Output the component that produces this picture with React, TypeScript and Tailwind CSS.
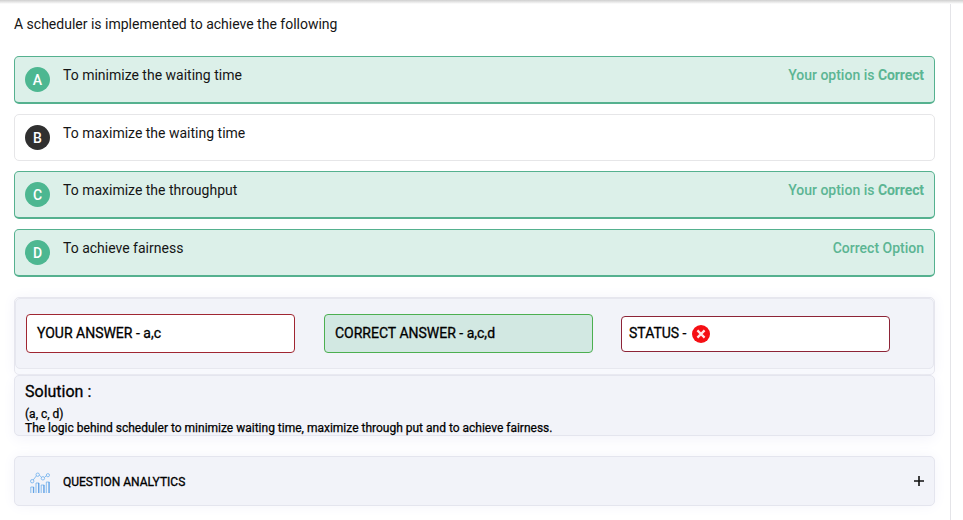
import React from "react";

type Option = {
  letter: string;
  text: string;
  correct: boolean;
  note?: React.ReactNode;
  box: string;
};

const chosen = (
  <>
    Your option is <b className="font-bold tracking-[-0.1px]">Correct</b>
  </>
);

const options: Option[] = [
  { letter: "A", text: "To minimize the waiting time", correct: true, note: chosen, box: "h-12 mb-2.5" },
  { letter: "B", text: "To maximize the waiting time", correct: false, box: "h-[47px] mb-2.5" },
  { letter: "C", text: "To maximize the throughput", correct: true, note: chosen, box: "h-12 mb-2.5" },
  { letter: "D", text: "To achieve fairness", correct: true, note: "Correct Option", box: "h-12" },
];

function OptionRow({ letter, text, correct, note, box }: Option) {
  return (
    <div
      className={`${box} flex items-start rounded-[5px] border pl-2.5 pr-2.5 ${
        correct ? "border-[#55b18f] border-b-2 bg-[#dcf0e9]" : "border-[#e6e6e8] bg-white"
      }`}
    >
      <span
        className={`mt-2.5 flex size-[25px] items-center justify-center rounded-full text-[14px] font-medium leading-none text-white ${
          correct ? "bg-[#4db791]" : "bg-[#303030]"
        }`}
      >
        {letter}
      </span>
      <span className="ml-[13px] mt-2 text-[14px] leading-5">{text}</span>
      {note && (
        <span className="ml-auto mt-2 text-[14px] font-medium leading-5 text-[#5bb593]">{note}</span>
      )}
    </div>
  );
}

function ErrorIcon() {
  return (
    <svg className="ml-1.5 size-[18px]" viewBox="0 0 18 18">
      <circle cx="9" cy="9" r="9" fill="#f50f14" />
      <path d="M5.4 5.4l7.2 7.2M12.6 5.4l-7.2 7.2" stroke="#ffe9e9" strokeWidth="2.2" />
    </svg>
  );
}

function AnalyticsIcon() {
  return (
    <svg className="h-[22px] w-5" viewBox="0 0 20 22" fill="none" stroke="#6fb0ee" strokeWidth="0.8">
      <path d="M3.2 8L6.5 3.7M9.3 3.2l2.3 2.1M14.5 5.4l2.1-1.9" />
      <circle cx="2.2" cy="9.2" r="1.7" />
      <circle cx="7.7" cy="2.7" r="1.7" />
      <circle cx="12.9" cy="6.3" r="1.7" />
      <circle cx="17.9" cy="3.2" r="1.6" />
      <path d="M.8 21v-6h3v6M6 21V11h3v10M11.2 21v-8h3v8M16.3 21V10h3v11" />
      <path d="M3.4 15v6M8.6 11v10M13.8 13v8M18.9 10v11" stroke="#4a90e0" />
    </svg>
  );
}

export default function App() {
  return (
    <div className="h-[520px] w-[963px] overflow-hidden bg-white font-[Roboto,sans-serif] text-[#151515]">
      <div className="h-1 bg-linear-to-b from-[#cfcfcf] to-white" />
      <main className="h-[516px] w-[951px] border-r border-[#e4e4e8] pl-3.5 pr-[15px] pt-2.5">
        <p className="mb-[22px] h-5 text-[14px] leading-5">A scheduler is implemented to achieve the following</p>
        <div>
          {options.map((o) => (
            <OptionRow key={o.letter} {...o} />
          ))}
        </div>
        <section className="mt-5 h-[78px] rounded-[5px] border border-[#e6e6ee] bg-[#f8f9fd] shadow-[0_0_14px_#f4f4fb]">
          <div className="flex h-[71px] items-center rounded-[5px] border border-[#e6e7ef] bg-[#f2f3f9] pl-2.5 text-[14px] leading-5 text-black [-webkit-text-stroke:0.3px_black]">
            <div className="flex h-[39px] w-[269px] items-center rounded border border-[#a02632] bg-white pb-0.5 pl-2.5">YOUR ANSWER - a,c</div>
            <div className="ml-[29px] flex h-[39px] w-[269px] items-center rounded border border-[#4caf50] bg-[#d2e8e2] pb-0.5 pl-2.5">
              CORRECT ANSWER - a,c,d
            </div>
            <div className="ml-7 flex h-9 w-[269px] items-center rounded border border-[#8d2437] bg-white pl-[7px]">
              <span className="pb-0.5">STATUS -</span> <ErrorIcon />
            </div>
          </div>
        </section>
        <section className="h-[61px] rounded-[5px] border border-[#e4e5ee] bg-[#f2f3f9] pl-2.5 pt-1.5 text-black shadow-[0_4px_14px_#f4f4fb]">
          <h2 className="text-[16px] leading-5 [-webkit-text-stroke:0.3px_black]">Solution :</h2>
          <p className="mt-[5px] text-[12px] leading-[14px] [-webkit-text-stroke:0.25px_black]">
            (a, c, d)
            <br />
            The logic behind scheduler to minimize waiting time, maximize through put and to achieve fairness.
          </p>
        </section>
        <section className="mt-5 flex h-[50px] items-center rounded-[5px] border border-[#e4e5ee] bg-[#f2f3f9] pl-[15px] pr-2.5 text-black shadow-[0_0_14px_#f4f4fb]">
          <div className="mt-1">
            <AnalyticsIcon />
          </div>
          <h3 className="ml-[13px] pt-0.5 text-[12px] leading-4 [-webkit-text-stroke:0.3px_black]">QUESTION ANALYTICS</h3>
          <svg className="ml-auto size-2.5" viewBox="0 0 10 10" stroke="#111" strokeWidth="1.6">
            <path d="M5 0v10M0 5h10" />
          </svg>
        </section>
      </main>
    </div>
  );
}
